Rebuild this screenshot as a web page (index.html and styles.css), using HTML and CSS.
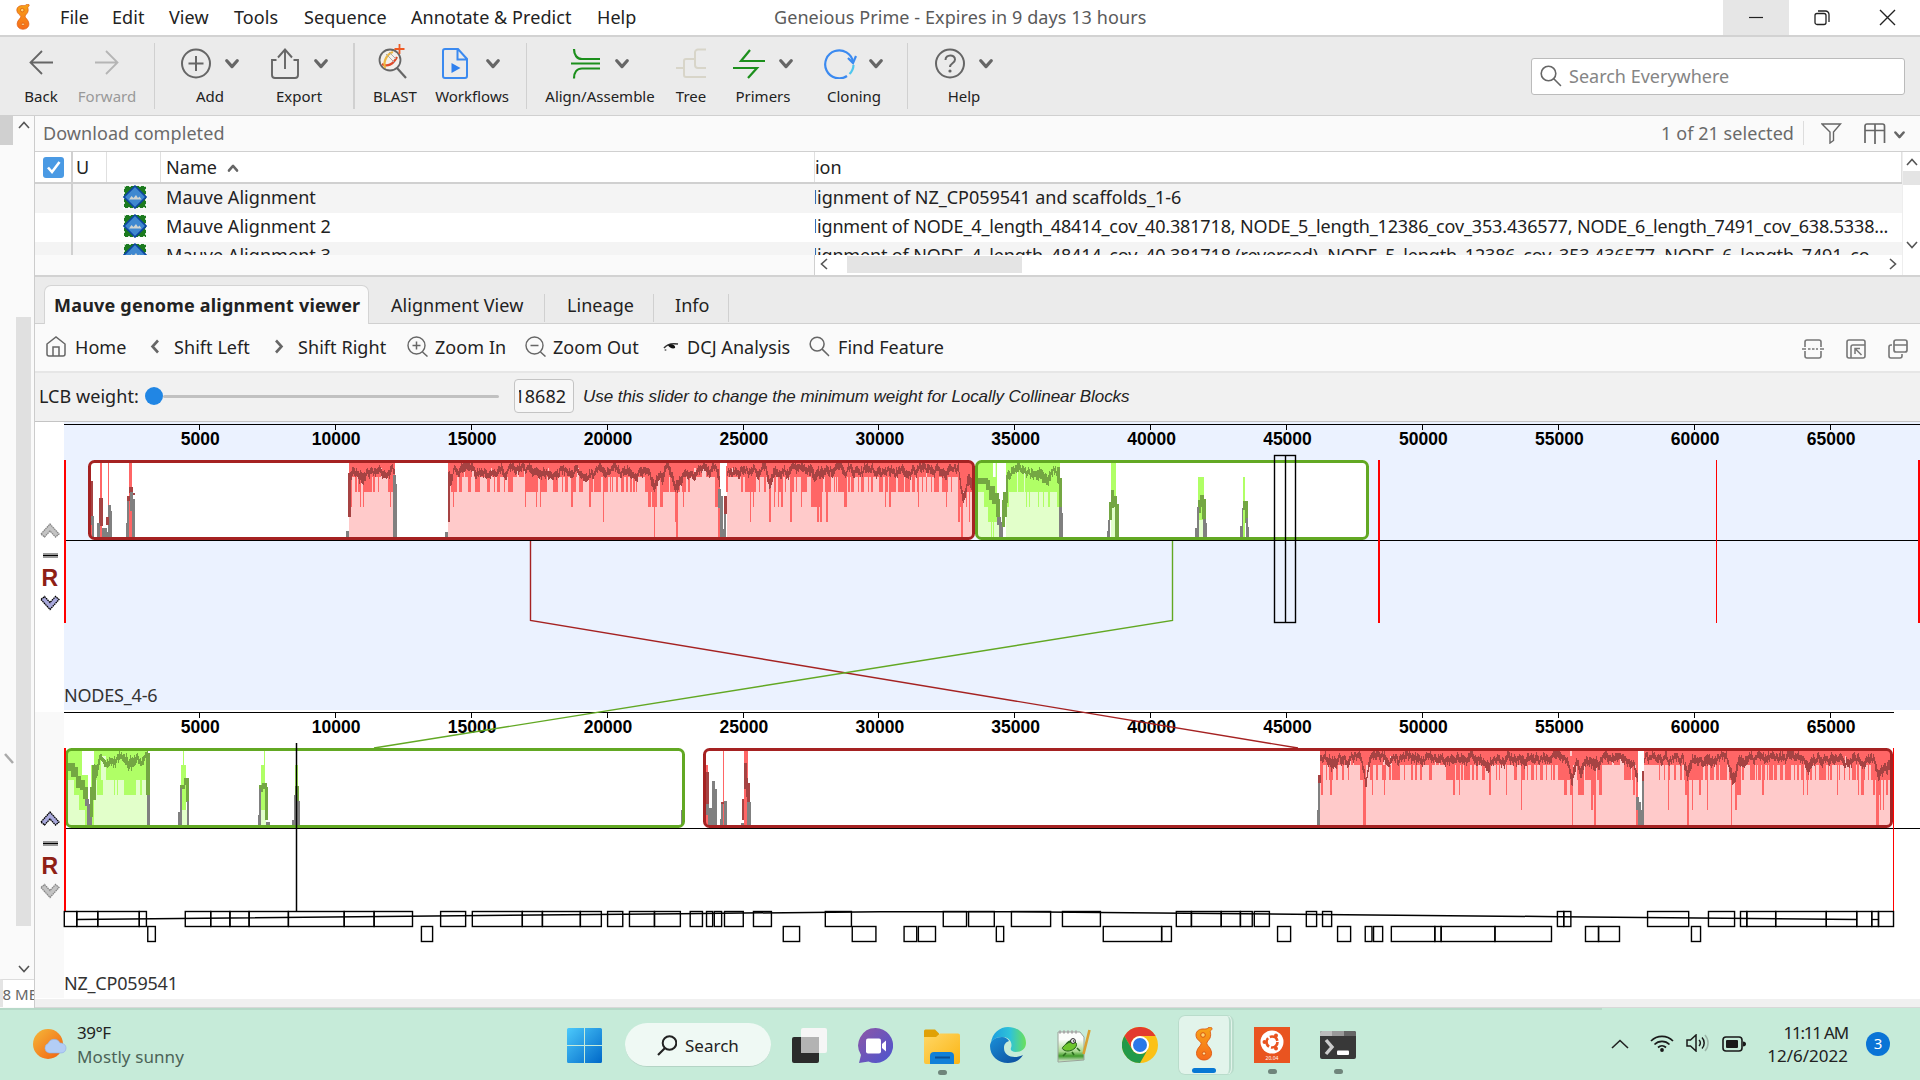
FILE: index.html
```html
<!DOCTYPE html>
<html lang="en">
<head>
<meta charset="utf-8">
<title>Geneious Prime</title>
<link rel="stylesheet" href="styles.css">
</head>
<body>
<svg width="0" height="0" class="defs">
  <defs>
    <linearGradient id="gOrange" x1="0" y1="0" x2="0" y2="1"><stop offset="0" stop-color="#f7a417"/><stop offset="1" stop-color="#f76b1a"/></linearGradient>
    <linearGradient id="gSun" x1="0" y1="0" x2="1" y2="1"><stop offset="0" stop-color="#f5b83a"/><stop offset="1" stop-color="#f2600f"/></linearGradient>
    <linearGradient id="gWin" x1="0" y1="0" x2="1" y2="1"><stop offset="0" stop-color="#4cc9fb"/><stop offset="1" stop-color="#0068c8"/></linearGradient>
    <linearGradient id="gChat" x1="0" y1="0" x2="1" y2="1"><stop offset="0" stop-color="#8e56a6"/><stop offset="1" stop-color="#4a55d0"/></linearGradient>
    <linearGradient id="gFold" x1="0" y1="0" x2="1" y2="1"><stop offset="0" stop-color="#ffd766"/><stop offset="1" stop-color="#fbb514"/></linearGradient>
    <linearGradient id="gEdge" x1="0" y1="0" x2="1" y2="0"><stop offset="0" stop-color="#1b9de0"/><stop offset=".55" stop-color="#2fc3d8"/><stop offset="1" stop-color="#6be05a"/></linearGradient>
    <linearGradient id="gEdge2" x1="0" y1="0" x2="1" y2="1"><stop offset="0" stop-color="#1a8fd8"/><stop offset="1" stop-color="#0c4a9a"/></linearGradient>
    <linearGradient id="gPage" x1="0" y1="0" x2="0" y2="1"><stop offset=".25" stop-color="#fbfdfb"/><stop offset=".65" stop-color="#a9d98f"/><stop offset=".8" stop-color="#3f9a2a"/><stop offset="1" stop-color="#e8f2e4"/></linearGradient>
    <symbol id="chev" viewBox="0 0 14 10"><path d="M1.8 1.8 7 7.6 12.2 1.8" fill="none" stroke="#666" stroke-width="3.2" stroke-linecap="round" stroke-linejoin="round"/></symbol>
    <symbol id="thin" viewBox="0 0 12 8"><path d="M1 7 6 1.5 11 7" fill="none" stroke="#555" stroke-width="1.6"/></symbol>
    <symbol id="logo" viewBox="0 0 18 34"><path d="M13 1c1-1.300 4-1 4 .6 0 1.800-1.600 1.600-1.800 3 .5 2 .8 4-.2 6.400-1 2-3.200 3.500-3.200 5.500 0 2 4 4 4.700 8.500C17.200 30 13.500 33 9 33S.9 30 1.600 25c.6-4.200 4.600-6.400 4.600-8.500C6.200 14.500 1 13 1 8 1 3.500 5 2 8 2c2.500 0 4 .2 5-1z" fill="url(#gOrange)" stroke="#dc5a14" stroke-width=".9"/><circle cx="8" cy="8" r="2.300" fill="#ffd36b" stroke="#d9570f"/><circle cx="9" cy="26.500" r="1.700" fill="#ffe2a0" stroke="#d9570f"/></symbol>
    <symbol id="mauve" viewBox="0 0 24 24"><rect x="1" y="1" width="22" height="22" fill="#1c7a1f"/><rect x="1" y="1" width="22" height="22" fill="none" stroke="#fff" stroke-width="1.500" stroke-dasharray="2 3"/><path d="M12 1 23 12 12 23 1 12z" fill="#3f88d0" stroke="#0d45a0" stroke-width="1.600"/><path d="M6 14.500 8.500 11l2 2 2.500-3 2 3 1.500-1.500L18.500 14.500z" fill="#cfd3d0"/></symbol>
    <symbol id="lens" viewBox="0 0 22 22"><circle cx="8.500" cy="8.500" r="7.300" fill="none" stroke="#666" stroke-width="1.600"/><path d="m14 14 6.500 6.500" stroke="#666" stroke-width="1.600" stroke-linecap="round"/></symbol>
  </defs>
</svg>

<div class="app">
  <header class="titlebar">
    <svg class="logo" width="14" height="26" viewBox="0 0 18 34" preserveAspectRatio="none"><use href="#logo"/></svg>
    <nav class="menu"><span>File</span><span>Edit</span><span>View</span><span>Tools</span><span>Sequence</span><span>Annotate &amp; Predict</span><span>Help</span></nav>
    <div class="title">Geneious Prime - Expires in 9 days 13 hours</div>
    <div class="winbtns">
      <span class="min"><svg width="16" height="16"><path d="M1 7.500h14" stroke="#222" stroke-width="1.200"/></svg></span>
      <span><svg width="16" height="16"><rect x="1" y="3.500" width="11" height="11" rx="2" fill="none" stroke="#222" stroke-width="1.300"/><path d="M4 1h7.500a3.500 3.500 0 0 1 3.500 3.500V12" fill="none" stroke="#222" stroke-width="1.300"/></svg></span>
      <span><svg width="17" height="17"><path d="m1 1 15 15M16 1 1 16" stroke="#222" stroke-width="1.400"/></svg></span>
    </div>
  </header>

  <div class="toolbar">
    <div class="tool back"><div class="pics"><svg width="24" height="26"><path d="M13 1 1.500 12.500 13 24M1.500 12.500H24" fill="none" stroke="#666" stroke-width="1.800"/></svg></div>Back</div>
    <div class="tool fwd"><div class="pics"><svg width="24" height="26"><path d="M11 1 22.500 12.500 11 24M22.500 12.500H0" fill="none" stroke="#b5b5b5" stroke-width="1.800"/></svg></div>Forward</div>
    <i class="sep s1"></i>
    <div class="tool add"><div class="pics"><svg width="30" height="31"><circle cx="15" cy="15.500" r="14" fill="none" stroke="#666" stroke-width="2"/><path d="M15 8v15M7.500 15.500h15" stroke="#666" stroke-width="2"/></svg><svg class="chev" width="14" height="10"><use href="#chev"/></svg></div>Add</div>
    <div class="tool export"><div class="pics"><svg width="30" height="31"><path d="M6.500 12H2v15a3 3 0 0 0 3 3h20a3 3 0 0 0 3-3V12h-4.500M15 21V1.500M8 9.500l7-8 7 8" fill="none" stroke="#666" stroke-width="1.900"/></svg><svg class="chev" width="14" height="10"><use href="#chev"/></svg></div>Export</div>
    <i class="sep s2"></i>
    <div class="tool blast"><div class="pics"><svg class="up" width="32" height="36"><circle cx="14" cy="16" r="10.500" fill="#f4f1ec" stroke="#666" stroke-width="1.800"/><path d="m21 24 9 10" stroke="#666" stroke-width="2.200"/><path d="M6 20c5 3 11 1 15-7" fill="none" stroke="#e04a2a" stroke-width="2.200"/><path d="M17 8c-6 2-10 9-8 16" fill="none" stroke="#edb843" stroke-width="2.200"/><path d="m10 10 9 9M13 8l7 7" stroke="#aaa"/><path d="M23.500 0v10M18.500 5h10" stroke="#ee5a24" stroke-width="1.800"/></svg></div>BLAST</div>
    <div class="tool work"><div class="pics"><svg width="26" height="31"><path d="M3 1h13l9 10v17a2 2 0 0 1-2 2H3a2 2 0 0 1-2-2V3a2 2 0 0 1 2-2zM15.500 1v10.500H25" fill="none" stroke="#3b8af0" stroke-width="2"/><path d="M9.500 15v10l9-5z" fill="#2f80ee"/></svg><svg class="chev" width="14" height="10"><use href="#chev"/></svg></div>Workflows</div>
    <i class="sep s3"></i>
    <div class="tool align"><div class="pics"><svg width="30" height="31"><path d="M3 1c0 6 3 10 8 10h18M0 15.500h29M29 20.500H11c-5 0-8 4-8 10" fill="none" stroke="#1c8f1c" stroke-width="2.200"/></svg><svg class="chev" width="14" height="10"><use href="#chev"/></svg></div>Align/Assemble</div>
    <div class="tool tree"><div class="pics"><svg width="30" height="31"><path d="M0 20h8M8 20v-7a2 2 0 0 1 2-2h9M8 20v7a2 2 0 0 0 2 2h20M30 1.500h-8a3 3 0 0 0-3 3V17a3 3 0 0 0 3 3h8" fill="none" stroke="#d8d5c9" stroke-width="2"/></svg></div>Tree</div>
    <div class="tool prim"><div class="pics"><svg width="32" height="31"><path d="M17 2 8 13h24M0 20h24L15 30" fill="none" stroke="#1c8f1c" stroke-width="2.200"/></svg><svg class="chev" width="14" height="10"><use href="#chev"/></svg></div>Primers</div>
    <div class="tool clon"><div class="pics"><svg width="33" height="31"><path d="M23 28a14 14 0 1 1 6-14" fill="none" stroke="#3b8af0" stroke-width="2.200"/><path d="m24 10 5 5 3-7" fill="none" stroke="#3b8af0" stroke-width="2.200"/><path d="M29.500 17a13 13 0 0 1-4 9" fill="none" stroke="#4fc7ee" stroke-width="2.200"/></svg><svg class="chev" width="14" height="10"><use href="#chev"/></svg></div>Cloning</div>
    <i class="sep s4"></i>
    <div class="tool help"><div class="pics"><svg width="30" height="31"><circle cx="15" cy="15.500" r="14" fill="none" stroke="#666" stroke-width="2"/><path d="M10.500 12c0-6 9.500-6 9.500-.5 0 4-5 3.500-5 7.500" fill="none" stroke="#666" stroke-width="2"/><circle cx="15" cy="23" r="1.600" fill="#666"/></svg><svg class="chev" width="14" height="10"><use href="#chev"/></svg></div>Help</div>
    <div class="search"><svg width="22" height="22"><use href="#lens"/></svg><span>Search Everywhere</span></div>
  </div>

  <div class="workspace">
    <aside class="side">
      <div class="side-top"><i class="stub"></i><svg width="12" height="8"><use href="#thin"/></svg></div>
      <div class="side-track"><svg class="notch" width="13" height="12"><path d="m4 2 8 9" stroke="#aaa" stroke-width="2.500"/></svg><i class="side-thumb"></i></div>
      <svg class="side-down" width="12" height="8"><use href="#thin" transform="rotate(180 6 4)"/></svg>
      <div class="side-mem"><span>68 MB</span></div>
    </aside>

    <main class="main">
      <div class="status"><span class="msg">Download completed</span><span class="sel">1 of 21 selected</span>
        <svg class="filter" width="21" height="21"><path d="M1 1h18.500L12.500 9v8.500L9 20V9z" fill="none" stroke="#666" stroke-width="1.400"/></svg>
        <svg class="cols" width="22" height="21"><path d="M1 20V3a2 2 0 0 1 2-2h15.500a2 2 0 0 1 2 2v17M11 1v20M1 7.500h19.500" fill="none" stroke="#666" stroke-width="1.700"/></svg>
        <svg class="cchev" width="11" height="8" viewBox="0 0 14 10"><use href="#chev"/></svg>
      </div>

      <div class="table">
        <div class="grid">
          <div class="row head"><span class="c-check"><svg width="21" height="21"><rect width="21" height="21" rx="3" fill="#4a9ae4"/><path d="m5 10.500 4 4.500 7.500-10" fill="none" stroke="#fff" stroke-width="2.600"/></svg></span><span class="c-u">U</span><span class="c-icon"></span><span class="c-name">Name<svg width="12" height="8" viewBox="0 0 14 10"><use href="#chev" transform="rotate(180 7 5)"/></svg></span><span class="c-desc hd">ion</span></div>
          <div class="row odd"><span class="c-check"></span><span class="c-u"></span><span class="c-icon"><svg width="24" height="24"><use href="#mauve"/></svg></span><span class="c-name">Mauve Alignment</span><span class="c-desc">lignment of NZ_CP059541 and scaffolds_1-6</span></div>
          <div class="row"><span class="c-check"></span><span class="c-u"></span><span class="c-icon"><svg width="24" height="24"><use href="#mauve"/></svg></span><span class="c-name">Mauve Alignment 2</span><span class="c-desc long">lignment of NODE_4_length_48414_cov_40.381718, NODE_5_length_12386_cov_353.436577, NODE_6_length_7491_cov_638.5338...</span></div>
          <div class="row odd cut"><span class="c-check"></span><span class="c-u"></span><span class="c-icon"><svg width="24" height="24"><use href="#mauve"/></svg></span><span class="c-name">Mauve Alignment 3</span><span class="c-desc long">lignment of NODE_4_length_48414_cov_40.381718 (reversed), NODE_5_length_12386_cov_353.436577, NODE_6_length_7491_co...</span></div>
          <div class="hscroll"><div class="htrack"><svg width="8" height="12"><path d="M7 1 1.500 6 7 11" fill="none" stroke="#555" stroke-width="1.600"/></svg><i></i><svg class="r" width="8" height="12"><path d="m1 1 5.500 5L1 11" fill="none" stroke="#555" stroke-width="1.600"/></svg></div></div>
        </div>
        <div class="vscroll"><svg width="12" height="8"><use href="#thin"/></svg><i></i><svg class="dn" width="12" height="8"><use href="#thin" transform="rotate(180 6 4)"/></svg></div>
      </div>

      <div class="tabs"><b class="tab on">Mauve genome alignment viewer</b><span class="tab t2">Alignment View</span><span class="tab t3">Lineage</span><span class="tab t4">Info</span></div>

      <div class="actions">
        <span class="a1"><svg width="20" height="21"><path d="M1 8 10 1l9 7v10a2 2 0 0 1-2 2H3a2 2 0 0 1-2-2zM7 20v-9h6v9" fill="none" stroke="#666" stroke-width="1.500"/></svg>Home</span>
        <span class="a2"><svg width="10" height="15"><path d="M8 1.500 2.500 7.500 8 13.500" fill="none" stroke="#666" stroke-width="2.600"/></svg>Shift Left</span>
        <span class="a3"><svg width="10" height="15"><path d="m2 1.500 5.500 6L2 13.500" fill="none" stroke="#666" stroke-width="2.600"/></svg>Shift Right</span>
        <span class="a4"><svg width="21" height="21"><circle cx="9.500" cy="9.500" r="8.500" fill="none" stroke="#666" stroke-width="1.400"/><path d="m15.500 16 5 4.500M5.500 9.500h8M9.500 5.500v8" stroke="#666" stroke-width="1.500"/></svg>Zoom In</span>
        <span class="a5"><svg width="21" height="21"><circle cx="9.500" cy="9.500" r="8.500" fill="none" stroke="#666" stroke-width="1.400"/><path d="m15.500 16 5 4.500M5.500 9.500h8" stroke="#666" stroke-width="1.500"/></svg>Zoom Out</span>
        <span class="a6"><svg width="16" height="11"><path d="M1 7c3-4 8-5 14-4" fill="none" stroke="#333" stroke-width="1.500"/><path d="M5 4c3-2 8 0 7 3-2 1-6 0-7-3z" fill="#111"/><circle cx="2.500" cy="9" r="1" fill="#777"/></svg>DCJ Analysis</span>
        <span class="a7"><svg width="21" height="21" viewBox="0 0 22 22"><use href="#lens"/></svg>Find Feature</span>
        <span class="views">
          <svg width="22" height="20"><path d="M3 8V3a2 2 0 0 1 2-2h12a2 2 0 0 1 2 2v5M3 12v5a2 2 0 0 0 2 2h12a2 2 0 0 0 2-2v-5M0 10h4M18 10h4" fill="none" stroke="#777" stroke-width="1.600"/><path d="M6 10h10" stroke="#777" stroke-width="1.500" stroke-dasharray="2.500 1.500"/></svg>
          <svg width="20" height="20"><rect x="1" y="1" width="18" height="18" rx="2" fill="none" stroke="#777" stroke-width="1.600"/><path d="M5 19V8a2 2 0 0 1 2-2h12M9 15V9.500h5M9.500 10l6 6" fill="none" stroke="#777" stroke-width="1.500"/></svg>
          <svg width="20" height="20"><rect x="6" y="1" width="13" height="12" rx="2" fill="none" stroke="#777" stroke-width="1.700"/><path d="M6 6h13M4 6H3a2 2 0 0 0-2 2v9a2 2 0 0 0 2 2h9a2 2 0 0 0 2-2v-2" fill="none" stroke="#777" stroke-width="1.600"/></svg>
        </span>
      </div>

      <div class="lcb"><label>LCB weight:</label><div class="slider"><i class="knob"></i><i class="rail"></i></div><div class="num"><span>18682</span></div><em>Use this slider to change the minimum weight for Locally Collinear Blocks</em></div>

      <svg class="canvas" id="canvas" width="1885" height="577" viewBox="35 422 1885 577"></svg>
      <div class="foot"></div>
    </main>
  </div>

  <footer class="taskbar">
    <i class="edge-line"></i>
    <div class="weather"><svg width="34" height="32"><circle cx="15" cy="15" r="15" fill="url(#gSun)"/><path d="M16 24a5 5 0 0 1-1-9.500 6.500 6.500 0 0 1 12-.5c4 0 6 2.500 6 5 0 3-2 5-5 5z" fill="#b3cdf5" stroke="#8fb0e4" stroke-width=".6"/></svg><div><p>39°F</p><p class="dim">Mostly sunny</p></div></div>
    <div class="apps">
      <svg class="p-win" width="35" height="35"><path d="M0 1.500A1.500 1.500 0 0 1 1.500 0H17v17H0zM18 0h15.500A1.500 1.500 0 0 1 35 1.500V17H18zM0 18h17v17H1.500A1.500 1.500 0 0 1 0 33.500zM18 18h17v15.500a1.500 1.500 0 0 1-1.500 1.500H18z" fill="url(#gWin)"/></svg>
      <div class="pill"><svg width="20" height="21"><circle cx="12.500" cy="8" r="6.800" fill="none" stroke="#222" stroke-width="2"/><path d="m8 13-7 7" stroke="#222" stroke-width="2.200"/></svg>Search</div>
      <svg class="p-task" width="36" height="35"><rect y="9" width="27" height="26" rx="2" fill="#2b2b2b"/><rect x="9" width="26" height="25" rx="2" fill="#f6f6f6"/><path d="M9 9h18v16H9z" fill="#b3b3b3"/></svg>
      <svg class="p-chat" width="35" height="36"><path d="M17.500 0a17.500 17.500 0 1 1-7 33.500L1 35l2-8A17.500 17.500 0 0 1 17.500 0z" fill="url(#gChat)"/><rect x="8" y="10.500" width="15" height="15" rx="2" fill="#fff"/><path d="m24 16 4-3.500v11L24 20z" fill="#fff"/></svg>
      <span class="slot p-fold"><svg width="36" height="35"><path d="M0 2a1.500 1.500 0 0 1 1.500-1.500H11l4 4v5H0z" fill="#e0a106"/><path d="M0 8h12l4-3.500h18a2 2 0 0 1 2 2V33a2 2 0 0 1-2 2H2a2 2 0 0 1-2-2z" fill="url(#gFold)"/><path d="M6 35V27a4 4 0 0 1 4-4h16a4 4 0 0 1 4 4v8z" fill="#1180d8"/><path d="M11 28.500h15" stroke="#0b4f94" stroke-width="2"/></svg><i class="dot"></i></span>
      <svg class="p-edge" width="36" height="36"><path d="M1 16C2 6 10 0 18 0c10 0 18 7 18 16 0 6-5 9-10 9-4 0-6-2-5-4 2-6-2-11-9-11C7 10 3 12 1 16z" fill="url(#gEdge)"/><path d="M12 10C5 10 0 14 0 19c0 10 8 17 18 17 7 0 12-3 15-8-8 4-19 2-19-7 0-4 2-6 5-7-1-2-4-4-7-4z" fill="url(#gEdge2)"/></svg>
      <svg class="p-npp" width="36" height="36"><path d="M2 4h22l4 5v23l-26 2z" fill="url(#gPage)" stroke="#9aa39a" stroke-width="1"/><path d="M3 4h20" stroke="#aaa" stroke-width="3" stroke-dasharray="2 2"/><path d="M9 19c1-5 6-7 9-6M10 25l-3 3M16 24l2 3M21 20l3 3" fill="none" stroke="#2c6d1f" stroke-width="1.600"/><path d="M7 19c3-4 8-6 12-5 2 1 2 4 0 6-3 3-8 4-11 2-2-1-2-2-1-3z" fill="#6cc52c" stroke="#27621c" stroke-width="1"/><circle cx="17" cy="13" r="2.400" fill="#fff" stroke="#222"/><circle cx="17.500" cy="13" r=".8" fill="#111"/><path d="m33.500 2-5 20-1 4" fill="none" stroke="#d9a132" stroke-width="2.600"/></svg>
      <svg class="p-chr" width="36" height="36" viewBox="-18 -18 36 36"><circle r="18" fill="#fbc116"/><path d="M-15.600-9A18 18 0 0 1 15.600-9H0A9 9 0 0 0-7.800 4.500z" fill="#e33b2e"/><path d="M-15.600-9A18 18 0 0 0 0 18L7.800 4.500A9 9 0 0 1-7.800 4.500z" fill="#229a48"/><circle r="9" fill="#fff"/><circle r="7" fill="#2a78e8"/></svg>
      <span class="slot p-gen"><svg width="18" height="34"><use href="#logo"/></svg><i class="bar"></i></span>
      <span class="slot p-ubu"><svg width="36" height="36"><path d="M0 0h36v36H0z" fill="#e95420"/><circle cx="18" cy="15" r="11.500" fill="#fff"/><circle cx="18" cy="15" r="5.500" fill="none" stroke="#e95420" stroke-width="2.600" stroke-dasharray="9.500 2"/><g fill="#e95420"><circle cx="10.500" cy="15" r="2"/><circle cx="22" cy="8.500" r="2"/><circle cx="22" cy="21.500" r="2"/></g><text x="18" y="33" class="ubv">20.04</text></svg><i class="dot"></i></span>
      <span class="slot p-term"><svg width="36" height="28"><rect width="36" height="28" rx="2" fill="#383838"/><path d="M0 5V2a2 2 0 0 1 2-2h10v5z" fill="#bbb"/><path d="M12 0h12v5H12z" fill="#999"/><path d="M24 0h10a2 2 0 0 1 2 2v3H24z" fill="#666"/><path d="m6 9 6 7-6 7" fill="none" stroke="#ccc" stroke-width="3.400"/><rect x="17" y="19.500" width="12" height="4.500" rx="1" fill="#fff"/></svg><i class="dot"></i></span>
    </div>
    <div class="tray">
      <svg class="t-up" width="18" height="10"><path d="m1 9 8-7.500L17 9" fill="none" stroke="#222" stroke-width="1.600"/></svg>
      <svg class="t-wifi" width="24" height="18"><path d="M1 7a15.500 15.500 0 0 1 22 0M4.500 10.500a10.500 10.500 0 0 1 15 0M8 13.500a6 6 0 0 1 8 0" fill="none" stroke="#1a1a1a" stroke-width="1.700"/><circle cx="12" cy="16" r="1.900" fill="#1a1a1a"/></svg>
      <svg class="t-snd" width="24" height="18"><path d="M1 6h3.500L10 1v16l-5.500-5H1z" fill="none" stroke="#1a1a1a" stroke-width="1.500"/><path d="M13 6a4 4 0 0 1 0 6M16 3.500a8 8 0 0 1 0 11" fill="none" stroke="#1a1a1a" stroke-width="1.500"/><path d="M19 1a12 12 0 0 1 0 16" fill="none" stroke="#9bb5a8" stroke-width="1.500"/></svg>
      <svg class="t-bat" width="24" height="16"><rect x="1" y="1" width="19" height="14" rx="3" fill="none" stroke="#1a1a1a" stroke-width="1.600"/><rect x="4" y="4" width="12" height="8" rx="1" fill="#1a1a1a"/><path d="M21 5.500c2 0 3 1 3 2.500s-1 2.500-3 2.500z" fill="#1a1a1a"/></svg>
      <div class="clock"><p class="time">11:11 AM</p><p>12/6/2022</p></div>
      <span class="badge">3</span>
    </div>
  </footer>
</div>
<script src="chart.js"></script>
</body>
</html>
```
FILE: styles.css
```css
* { box-sizing: border-box; }
body { margin: 0; width: 1920px; height: 1080px; overflow: hidden; font: 18px/24px "Noto Sans", sans-serif; color: #222; background: #fafafa; }
svg { display: block; flex: none; }
p { margin: 0; }
i { display: block; flex: none; }
.defs { position: absolute; }
.app { display: flex; flex-direction: column; height: 1080px; }

.titlebar { height: 37px; flex: none; display: flex; align-items: center; background: #fff; border-bottom: 2px solid #d2d2d2; }
.logo { margin: -2px 0 0 16px; }
.menu { display: grid; grid-template-columns: 52px 57px 65px 70px 107px 186px 177px; margin: -2px 0 0 30px; white-space: nowrap; letter-spacing: .06px; }
.title { color: #5a5a5a; white-space: nowrap; letter-spacing: .08px; margin-top: -2px; }
.winbtns { margin-left: auto; display: grid; grid-template-columns: 66px 66px 65px; height: 35px; }
.winbtns span { display: grid; place-items: center; }
.winbtns .min { background: #e6e6e6; }

.toolbar { height: 79px; flex: none; display: flex; align-items: flex-start; background: #ebebeb; border-bottom: 1px solid #d0d0d0; font-size: 15px; line-height: 20px; }
.tool { display: flex; flex-direction: column; align-items: center; white-space: nowrap; padding-top: 8px; gap: 5px; }
.pics { height: 36px; display: flex; align-items: center; gap: 14px; }
.chev { margin-top: 2px; }
.up { margin: -2px 6px 0 0; }
.sep { width: 1px; height: 66px; margin-top: 6px; background: #d0d0d0; }
.back { width: 54px; margin-left: 14px; } .fwd { width: 78px; color: #999; }
.s1 { margin-left: 8px; } .add { width: 60px; margin-left: 25px; } .export { width: 60px; margin-left: 29px; }
.s2 { margin-left: 24px; width: 2px; } .blast { width: 50px; margin-left: 15px; } .work { width: 80px; margin-left: 12px; }
.work .pics { gap: 18px; margin-left: -2px; } .clon .pics { gap: 12px; margin-left: -2px; }
.s3 { margin-left: 14px; } .align { width: 110px; margin-left: 18px; } .tree { width: 32px; margin-left: 20px; }
.prim { width: 56px; margin-left: 28px; } .clon { width: 60px; margin-left: 33px; } .s4 { margin-left: 23px; }
.help { width: 60px; margin-left: 26px; } .help .pics { margin-left: -1px; }
.search { margin: 21px 15px 0 auto; width: 374px; height: 37px; border: 1px solid #bbb; border-radius: 3px; background: #fff; display: flex; align-items: center; gap: 7px; padding: 0 0 2px 8px; color: #858585; font-size: 18px; }

.workspace { flex: 1; display: flex; min-height: 0; }
.side { width: 35px; flex: none; border-right: 1px solid #ccc; background: #fafafa; display: flex; flex-direction: column; }
.side-top { height: 29px; display: flex; }
.side-top svg { margin: 5px 0 0 5px; }
.stub { width: 13px; height: 29px; background: #d0d0d0; }
.side-track { height: 816px; padding: 172px 3px 0 16px; position: relative; }
.side-thumb { width: 15px; height: 609px; background: #e0e0e0; }
.notch { position: absolute; left: 1px; top: 607px; }
.side-down { margin: 4px 0 0 18px; }
.side-mem { margin: 6px 0 0; height: 28px; border-top: 1px solid #ddd; border-left: 3px solid #e4e4e4; overflow: hidden; background: #fff; color: #666; font-size: 15px; line-height: 29px; white-space: nowrap; }
.side-mem span { margin-left: -9px; }

.main { width: 1885px; display: flex; flex-direction: column; }
.status { height: 36px; flex: none; display: flex; align-items: center; padding-left: 8px; border-bottom: 1px solid #d0d0d0; color: #6a6a6a; }
.msg { margin-top: -2px; letter-spacing: .07px; }
.sel { margin: -2px 0 0 auto; padding-right: 9px; border-right: 1px solid #ddd; letter-spacing: .06px; }
.filter { margin-left: 17px; } .cols { margin-left: 22px; } .cchev { margin: 2px 15px 0 8px; }

.table { height: 125px; flex: none; display: flex; border-bottom: 2px solid #d2d2d2; }
.grid { width: 1867px; }
.row { display: grid; grid-template-columns: 38px 34px 54px 654px 1087px; height: 29px; background: #fff; line-height: 27px; white-space: nowrap; overflow: hidden; }
.row > span { overflow: hidden; }
.row.odd { background: #f4f4f4; }
.row.head { height: 32px; border-bottom: 2px solid #d0d0d0; line-height: 31px; }
.head span { border-right: 1px solid #e0e0e0; }
.row .c-check { border-right: 2px solid #d0d0d0; padding: 5px 0 0 8px; }
.c-u { padding-left: 3px; }
.c-icon svg { margin: 1px 0 0 16px; }
.c-name { padding-left: 5px; display: flex; gap: 10px; letter-spacing: .05px; }
.c-name svg { margin-top: 12px; }
.c-desc { text-indent: -2.500px; letter-spacing: -.02px; }
.c-desc.long { letter-spacing: -.155px; }
.c-desc.hd { text-indent: 0; }
.row.cut { height: 13px; line-height: 26px; }
.hscroll { height: 20px; background: #fafafa; padding-left: 779px; }
.htrack { height: 20px; background: #fff; border-left: 1px solid #d0d0d0; display: flex; align-items: center; padding: 0 5px 2px; }
.htrack i { width: 175px; height: 17px; margin-left: 19px; background: #e4e4e4; }
.htrack .r { margin-left: auto; }
.vscroll { width: 18px; background: #fff; border-left: 1px solid #eee; display: flex; flex-direction: column; align-items: center; padding-top: 6px; }
.vscroll i { width: 17px; height: 14px; margin-top: 5px; background: #e4e4e4; }
.vscroll .dn { margin-top: 56px; }

.tabs { height: 47px; flex: none; display: flex; align-items: flex-end; background: #ebebeb; padding-left: 9px; box-shadow: inset 0 -1px #d0d0d0; white-space: nowrap; }
.tab { height: 39px; line-height: 40px; letter-spacing: .05px; }
.tab.on { width: 325px; background: #fafafa; border: 1px solid #d4d4d4; border-bottom: 0; border-radius: 7px 7px 0 0; padding-left: 9px; line-height: 38px; letter-spacing: .2px; }
.tab:not(.on) { background: linear-gradient(#d0d0d0, #d0d0d0) right 9px / 1px 28px no-repeat; }
.t2 { width: 176px; padding-left: 22px; } .t3 { width: 109px; padding-left: 22px; } .t4 { width: 75px; padding-left: 21px; }

.actions { height: 49px; flex: none; display: flex; align-items: center; border-bottom: 2px solid #e6e6e6; padding: 0 0 2px 11px; white-space: nowrap; letter-spacing: .06px; }
.actions > span { display: flex; align-items: center; gap: 9px; flex: none; }
.actions .a1 { width: 104px; } .actions .a2 { width: 124px; gap: 14px; } .actions .a3 { width: 133px; gap: 14px; }
.actions .a4 { width: 118px; gap: 7px; } .actions .a5 { width: 138px; gap: 7px; } .actions .a6 { width: 146px; gap: 8px; } .actions .a7 { gap: 8px; }
.actions .views { margin: 4px 12px 0 auto; gap: 22px; }

.lcb { height: 49px; flex: none; display: flex; align-items: center; background: #f1f1f1; border-bottom: 1px solid #c4c4c4; padding: 0 0 2px 4px; white-space: nowrap; }
.lcb label { width: 106px; letter-spacing: .05px; }
.slider { width: 354px; display: flex; align-items: center; }
.knob { width: 18px; height: 18px; border-radius: 50%; background: #2186e4; }
.rail { width: 336px; height: 3px; border-radius: 2px; background: #c1c1c1; }
.num { margin-left: 15px; width: 60px; height: 34px; border: 1px solid #c4c4c4; border-radius: 4px; background: #f7f7f7; padding: 4px 7px 0 4px; display: flex; }
.num span { width: 49px; overflow: hidden; direction: rtl; }
.lcb em { margin: 2px 0 0 9px; font: italic 17px "Liberation Sans", sans-serif; letter-spacing: -.06px; }

.canvas { flex: none; background: #fff; }
.axis { font: bold 17.500px "Liberation Sans", sans-serif; text-anchor: middle; fill: #000; }
.seq { font: 18px "Noto Sans", sans-serif; letter-spacing: -.2px; fill: #333; }
.rev { font: bold 23px "Liberation Sans", sans-serif; fill: #8f2015; }
.foot { flex: 1; background: #f0f0f0; border-bottom: 1px solid #d8d8d8; }

.taskbar { height: 72px; flex: none; display: flex; align-items: flex-start; background: #c6ebd9; position: relative; }
.edge-line { position: absolute; left: 0; top: 0; width: 1602px; height: 2px; background: #b6d9c8; }
.weather { width: 567px; display: flex; gap: 10px; padding: 13px 0 0 33px; font-size: 17px; }
.weather svg { margin-top: 8px; } .weather p { line-height: 24px; } .weather .dim { color: #4c6357; letter-spacing: .1px; }
.weather p:first-child { letter-spacing: -.5px; }
.apps { display: flex; align-items: flex-start; }
.apps > * { flex: none; }
.p-win { margin-top: 20px; }
.pill { margin: 15px 0 0 23px; width: 146px; height: 44px; border-radius: 22px; background: #eff9f4; border-bottom: 1px solid #b4d4c5; display: flex; align-items: center; gap: 8px; padding: 2px 0 0 32px; font-size: 17px; }
.p-task { margin: 20px 0 0 21px; } .p-chat { margin: 20px 0 0 30px; }
.slot { display: flex; flex-direction: column; align-items: center; }
.dot { width: 9px; height: 5px; border-radius: 3px; background: #6f857b; margin-top: 6px; }
.p-fold { margin: 21px 0 0 31px; width: 36px; } .p-edge { margin: 19px 0 0 30px; } .p-npp { margin: 20px 0 0 30px; } .p-chr { margin: 19px 0 0 30px; }
.p-gen { margin: 7px 0 0 20px; width: 56px; height: 60px; border-radius: 7px; background: #e2f4eb; border: 1px solid #b9dccb; border-right: 5px double #b9dccb; padding-top: 11px; }
.bar { width: 24px; height: 5px; border-radius: 3px; background: #0878d4; margin-top: 7px; }
.p-ubu { margin: 19px 0 0 20px; width: 36px; }
.ubv { font: 5px "Noto Sans", sans-serif; text-anchor: middle; fill: #fff; }
.p-term { margin: 23px 0 0 30px; width: 36px; } .p-term .dot { margin-top: 10px; }
.tray { margin-left: auto; width: 309px; display: flex; align-items: flex-start; font-size: 17px; }
.t-up { margin-top: 31px; } .t-wifi { margin: 26px 0 0 21px; } .t-snd { margin: 26px 0 0 12px; } .t-bat { margin: 28px 0 0 12px; }
.clock { width: 102px; text-align: right; padding-top: 13px; }
.clock p { line-height: 23px; } .clock .time { letter-spacing: -1.200px; }
.badge { margin: 24px 0 0 18px; width: 24px; height: 24px; border-radius: 50%; background: #0a74d6; color: #fff; text-align: center; font-size: 15px; line-height: 23px; }
```
FILE: chart.js
```js
// Draws the genome panels: rulers, locally collinear blocks, similarity profiles and annotations.
const PANEL = 288, RED = ['#a52222', '#ff6666', '#ffcaca', '#a64343'], GREEN = ['#62a823', '#b0ff66', '#e2ffca', '#74a743'];
const out = [];
const rect = (x0, x1, y0, y1, c) => out.push(`<path d="M${x0} ${y0}H${x1}V${y1}H${x0}z" fill="${c}" shape-rendering="crispEdges"/>`);
const line = (pts, c, w = 1) => out.push(`<polyline points="${pts}" fill="none" stroke="${c}" stroke-width="${w}"/>`);
const frame = (x0, x1, y0, y1) => out.push(`<rect x="${x0}" y="${y0}" width="${x1 - x0}" height="${y1 - y0}" fill="none" stroke="#000" stroke-width="1.4"/>`);
const text = (x, y, cls, s) => out.push(`<text x="${x}" y="${y}" class="${cls}">${s}</text>`);
let seed = 7;
const rnd = () => (seed = (seed * 16807) % 2147483647) / 2147483647;
const spans = s => s.trim().split(/[\s,]+/).map(t => { const [a, b] = t.split('-').map(Number); return [a, b || a + 2.6]; });

// One similarity region. f maps sample units to canvas x; levels are tooth lists for each depth.
function region(top, x0, x1, f, pal, base, levels, slits, dips, mid = 7.5) {
  rect(x0, x1, top, top + 74, pal[2]);
  rect(x0, x1, top, top + base, pal[1]);
  levels.forEach(([depth, list]) => spans(list).forEach(([a, b]) => rect(f(a), f(b), top + 3, top + depth, pal[1])));
  if (slits) spans(slits).forEach(([a, b]) => rect(f(a), f(b), top + 5, top + base, pal[2]));
  let d = '', w = mid;
  for (let x = x0; x < x1; x++) {
    w += (rnd() - .5) * 6.5 + (mid - w) * .25;
    let y = w, h = 4.5 + rnd() * 5;
    dips.forEach(([p, depth, r = 5]) => { const k = 1 - Math.abs(x - f(p)) / r; if (k > 0) { y += (depth - mid) * k; h += 4 * k; } });
    y = Math.max(0, y - h / 2);
    d += `M${x} ${top + Math.round(y)}h1v${Math.round(h)}h-1z`;
  }
  out.push(`<path d="${d}" fill="${pal[3]}" shape-rendering="crispEdges"/>`);
}
const bars = (f, dy, pal, list) => list.forEach(([a, b, y0, y1, k]) => rect(f(a), f(b), y0 / 3 + dy, y1 / 3 + dy, k < 0 ? '#808080' : pal[k]));
const block = (x0, x1, y, c) => out.push(`<rect x="${x0 + 1.5}" y="${y + 1.5}" width="${x1 - x0 - 3}" height="77" rx="5" fill="none" stroke="${c}" stroke-width="3"/>`);
const white = (x0, x1, y) => out.push(`<rect x="${x0}" y="${y}" width="${x1 - x0}" height="80" rx="6" fill="#fff"/>`);

// Backgrounds and rulers
rect(64, 1920, 422, 710, '#ebf2ff');
rect(35, 64, 712, 998, '#f9f9f9');
[[0, 1920], [PANEL, 1894]].forEach(([o, end]) => {
  rect(64, end, 424 + o, 425 + o, '#000');
  for (let i = 1; i <= 13; i++) {
    const x = 64 + i * 135.9;
    rect(Math.round(x) - 1, Math.round(x), 425 + o, 430 + o, '#000');
    text(x + .4, 444.5 + o, 'axis', i * 5000);
  }
});

const A = x => x / 3, B = x => 440 + x / 2.8, C = x => 900 + x / 3, D = x => x / 2.24, E = x => 680 + x / 2.45, F = x => 1300 + x / 2.529;

// Upper panel, red block
white(88, 975, 460);
bars(A, 440, RED, [[271, 279, 122, 228, 3], [270, 282, 228, 291, -1], [272, 275, 255, 291, 1], [300, 306, 69, 291, 1], [297, 308, 175, 258, 3], [291, 300, 248, 291, -1], [305, 320, 265, 291, -1],
  [324, 327, 69, 195, 1], [324, 333, 195, 291, -1], [327, 336, 213, 291, -1], [318, 326, 232, 255, 3], [315, 324, 276, 291, -1], [387, 396, 69, 291, 1], [387, 399, 142, 160, 3], [396, 405, 158, 165, 3], [381, 389, 168, 184, 3], [381, 388, 182, 291, -1], [378, 384, 250, 291, -1], [389, 399, 157, 212, -1], [396, 405, 178, 291, -1]]);
region(463, 349, 395, A, RED, 14, [[29, '1053-1057 1065-1070 1075-1083 1090-1115 1118-1124 1133-1137 1163-1185'], [44, '1054 1080 1089 1171'], [74, '1180-1183']], '1143', [[1047, 20, 4], [1085, 12, 6]]);
bars(A, 440, RED, [[1044, 1053, 100, 230, 3], [1038, 1047, 272, 291, -1], [1180, 1188, 105, 291, -1], [1185, 1191, 132, 291, -1]]);
region(463, 448, 720, B, RED, 14, [
  [29, '31-48 53-62 78-88 98-112 132-140 150-155 160-168 178-182 190-204 238-274 280-300 315-330 342-345 350-358 366-380 388-400 418-428 432-450 455-470 475-478 481-483 492-498 508-514 522-525 532-537 540-545 550-552 575-608 615-640 645-672 678-690 695-700 770-784'],
  [44, '37 239 268 281 367-372 418-423 582-592 594-608 615-624 658-665 679-683 770-784'], [59, '457 658-665'], [74, '600 661-665 778-784']],
  '66-70 90-94 143-146 216-220 234-238 302-305 384-390 711-716 733-746', [[26, 18, 4], [600, 24, 6], [622, 20, 4], [662, 20, 8], [784, 22, 4]]);
bars(B, 440, RED, [[21, 28, 115, 245, 3], [14, 22, 277, 291, -1]]);
rect(720, 726, 463, 537, '#fff');
bars(B, 440, RED, [[778, 788, 148, 204, -1], [784, 792, 168, 291, -1], [790, 796, 267, 291, -1], [795, 802, 220, 291, -1], [795, 804, 167, 222, 3]]);
region(463, 727, 973, B, RED, 14, [
  [29, '802-806 843-847 853-885 893-897 908-912 920-928 935-940 946-960 965-970 980-990 997-1000 1012-1028 1038-1072 1078-1095 1102-1105 1110-1112 1115-1140 1143-1148 1151-1160 1170-1173 1180-1187 1197-1201 1207-1213 1220-1222 1230-1240 1245-1255 1258-1278 1282-1300 1303-1316 1322-1330 1335-1342 1350 1362 1375 1383-1396 1406-1422 1430-1434 1450-1493'],
  [44, '869 877 920-927 935-938 946 954-959 980-986 1011 1040-1070 1080-1086 1131-1139 1247 1257-1262 1339 1416 1450-1463 1472-1475 1481'],
  [59, '868 921-926 980-985 1056-1061 1065-1069 1081-1086 1450-1456 1482'], [74, '1459-1463']],
  '818-821 1360-1364', [[922, 24, 4], [1050, 14, 12], [1463, 30, 5], [1485, 16, 8]]);

// Upper panel, green block
white(975, 1369, 460);
rect(977, 999, 463, 537, GREEN[1]);
bars(C, 440, GREEN, [[235, 252, 155, 291, 2], [250, 264, 200, 291, 2], [264, 297, 245, 291, 2], [273, 276, 245, 291, 1], [279, 282, 245, 291, 1], [279, 289, 69, 110, 2], [291, 300, 69, 180, 2]]);
rect(997, 1006, 463, 500, '#fff'); rect(993, 995, 463, 477, '#fff');
rect(1000, 1003, 500, 520, '#fff');
region(463, 1006, 1060, C, GREEN, 29, [[44, '318-328 378 388 415 428-431 444-450 471-480']], '351-354 372-375', [[318, 20, 5], [430, 13, 10], [478, 22, 4]], 9);
bars(C, 440, GREEN, [[235, 264, 113, 132, 3], [258, 270, 120, 150, 3], [267, 285, 138, 180, 3], [276, 297, 160, 192, 3], [288, 300, 178, 232, 3], [291, 303, 230, 255, -1], [298, 309, 245, 291, -1], [306, 315, 180, 262, 3], [310, 321, 155, 230, 3], [317, 325, 105, 190, 3], [471, 479, 80, 130, 3], [476, 486, 115, 202, 3], [478, 486, 202, 291, -1], [483, 489, 218, 291, -1],
  [633, 648, 69, 200, 1], [633, 648, 200, 291, 2], [632, 643, 150, 205, 3], [628, 635, 185, 240, 3], [638, 650, 168, 200, 3], [646, 656, 192, 291, 3], [624, 630, 240, 291, -1], [621, 627, 272, 291, -1],
  [894, 912, 110, 240, 1], [898, 912, 240, 291, 2], [893, 903, 180, 220, 3], [900, 911, 165, 200, 3], [907, 918, 178, 238, 3], [890, 896, 200, 291, -1], [885, 892, 264, 291, -1], [910, 918, 238, 291, -1], [915, 921, 250, 291, -1],
  [1029, 1035, 110, 291, 1], [1028, 1043, 184, 210, 3], [1035, 1043, 195, 250, 3], [1026, 1030, 205, 291, -1], [1020, 1027, 258, 291, -1], [1037, 1043, 235, 291, -1], [1041, 1047, 260, 291, -1]]);

// Lower panel, green block
white(65, 685, 748);
bars(D, 700, GREEN, [[150, 183, 153, 376, 1], [183, 196, 225, 376, 1], [151, 166, 240, 376, 2], [160, 178, 285, 376, 2], [178, 190, 330, 376, 2], [203, 214, 195, 376, 1]]);
region(751, 94, 148, D, GREEN, 29, [[44, '218-230 255 262 278-305 314-317 326-332']], '227-237', [[214, 18, 5], [290, 14, 10]], 8);
bars(D, 700, GREEN, [[150, 167, 190, 213, 3], [160, 175, 200, 232, 3], [171, 181, 228, 264, 3], [179, 191, 240, 270, 3], [186, 196, 262, 298, 3], [190, 200, 298, 318, -1], [195, 205, 312, 376, -1], [202, 209, 262, 350, 3], [207, 215, 195, 300, 3], [327, 335, 160, 285, 3], [330, 337, 285, 376, -1],
  [409, 412, 153, 200, 1], [405, 417, 195, 330, 1], [407, 418, 330, 376, 2], [403, 414, 255, 268, 3], [412, 423, 235, 255, 3], [416, 423, 250, 305, 3], [403, 408, 265, 376, -1], [399, 405, 335, 376, -1], [418, 424, 302, 376, -1],
  [591, 594, 153, 200, 1], [585, 594, 195, 330, 1], [585, 596, 330, 376, 2], [581, 590, 256, 275, 3], [587, 598, 250, 268, 3], [594, 600, 262, 360, 3], [580, 585, 268, 376, -1], [577, 582, 345, 376, -1], [596, 604, 367, 376, -1],
  [661, 668, 195, 376, 1], [661, 670, 258, 302, 3], [659, 664, 285, 376, -1], [655, 661, 360, 376, -1], [666, 673, 302, 376, -1], [1525, 1530, 330, 376, -1]]);

// Lower panel, red block
white(703, 1894, 748);
bars(E, 700, RED, [[62, 68, 195, 376, 1], [62, 71, 216, 312, 3], [64, 71, 312, 345, -1], [68, 78, 325, 376, -1], [78, 86, 243, 376, -1], [84, 91, 267, 376, -1], [105, 108, 153, 376, 1], [100, 115, 306, 313, 3], [101, 106, 313, 376, -1], [98, 102, 357, 376, -1], [107, 115, 304, 376, -1],
  [157, 167, 153, 376, 1], [157, 164, 190, 267, 3], [152, 158, 297, 360, 3], [150, 157, 370, 376, -1], [162, 167, 234, 290, 3], [165, 171, 250, 306, 3], [165, 173, 306, 376, -1]]);
region(751, 1320, 1638, F, RED, 14, [
  [29, '51-58 66-68 74-83 90-97 105-112 121-125 152-166 178-182 192-196 208-217 226-229 232-254 264 281-285 291-295 303-309 325-334 369-392 395-404 408-411 415-430 434-441 446-449 460-468 478-483 495-498 503 520-523 540-550 558-568 573-576 583-592 596-600 607-615 622-625 635 640-644 653-690 700-718 722-746 750-765 820-836 840-846 850-855'],
  [44, '52-57 77-82 159-166 181 212-216 387-391 401 478-482 521 668-675 682-690 704-717 736-748 756-764 843-848 850-855'],
  [59, '559 736-740'], [74, '159-166 688 744-748 850-855']],
  '126-129 134-136 210-214 228-232 341-344 351-354 789-793 810-820', [[80, 12, 6], [165, 38, 5], [475, 13, 3], [565, 12, 4], [688, 24, 5], [708, 20, 4], [745, 18, 7], [854, 32, 5]]);
rect(1638, 1644, 751, 825, '#fff');
bars(F, 700, RED, [[683, 688, 153, 168, 2], [45, 52, 225, 250, 3], [46, 51, 250, 376, -1], [43, 46, 330, 376, -1], [850, 857, 290, 330, -1], [855, 862, 306, 376, -1], [860, 866, 330, 376, -1], [865, 870, 243, 376, -1], [865, 873, 213, 243, 3]]);
region(751, 1644, 1891, F, RED, 14, [
  [29, '908 920-924 931-936 946-951 961-966 971-1010 1014-1019 1025-1033 1037-1048 1052-1060 1063-1080 1085-1113 1118-1122 1137-1150 1153 1159-1165 1170-1176 1182 1187-1196 1198-1206 1213-1221 1226-1243 1249-1253 1258-1262 1267-1274 1280-1286 1290-1295 1302-1306 1312-1330 1336 1341-1346 1357 1362 1376 1388 1396-1405 1408-1413 1418-1430 1436 1444-1449 1455-1492'],
  [44, '931 973-984 992 1009-1014 1030 1100-1115 1168-1173 1272 1283 1357 1410 1420-1426 1448-1455 1458-1466 1481-1487'],
  [59, '931 992 1030 1100-1105 1466-1470 1474'], [74, '979-984 1090 1457-1464']],
  '1378-1381', [[979, 24, 5], [1030, 14, 5], [1093, 26, 6], [1110, 14, 10], [1285, 12, 4], [1464, 30, 6], [1485, 18, 6]]);

block(88, 975, 460, RED[0]); block(975, 1369, 460, GREEN[0]);
block(65, 685, 748, GREEN[0]); block(703, 1893, 748, RED[0]);

rect(64, 1920, 540, 541, '#000'); rect(64, 1920, 828, 829, '#000');
[[64, 66, 0], [1378, 1380, 0], [1716, 1717, 0], [1918, 1920, 0], [64, 66, PANEL], [1893, 1894, PANEL]].forEach(([a, b, o]) => rect(a, b, 460 + o, 623 + o - (o ? 0 : 0), '#f00'));

// Links between matching blocks
line('530.5,541 530.5,620.5 1298,748', RED[0], 1.4);
line('1172.5,541 1172.5,620.5 374,748', GREEN[0], 1.4);

// Selection and cursor
frame(1274.5, 1295.5, 455.5, 622.5);
line('1285.5,455 1285.5,622', '#000', 1.4);
line('296.5,743 296.5,911', '#000', 1.5);

// Annotated features on both strands
const feats = (f, y, s) => spans(s).forEach(([a, b]) => frame(f(a), f(b), y, y + 15));
feats(D, 911.5, '144-172 172-219 219-312 312-328 415-472 472-515 515-558 558-646 646-771 771-838 838-924 987-1043 1058-1170 1170-1215 1215-1300 1300-1347 1361-1395 1410-1466 1466-1524');
feats(E, 911.5, '25-55 65-80 84-102 109-155 180-224 356-420 645-702 707-770 812-908 937-1030 1216-1253 1253-1326 1326-1373 1373-1402 1407-1444');
feats(F, 911.5, '16-42 57-80 651-667 667-685 879-983 1033-1099 1114-1130 1130-1203 1203-1331 1331-1408 1408-1446 1446-1463 1463-1501');
feats(D, 926.5, '331-348 944-969');
feats(E, 926.5, '253-293 422-480 549-580 584-626 775-793 1037-1180 1180-1204 1464-1496');
feats(F, 926.5, '95-128 165-182 186-209 231-341 341-357 357-493 493-636 722-755 755-808 990-1013');
line('77,919.5 680,913.7 880,911.7 1000,911.7 1320,914.5 1560,916.7 1857,919.5', '#000', 1.5);
line('1872,919.5 1878,919.5', '#000', 1.3);

text(64, 702, 'seq', 'NODES_4-6'); text(64, 990, 'seq', 'NZ_CP059541');

// Reorder and reverse controls
const arrow = (y, flip, on) => out.push(`<path transform="translate(50 ${y}) scale(1 ${flip})" d="M-9 4 0-6 9 4 5.500 7 0 1-5.500 7z" fill="${on ? '#a9a9dc' : '#c4c4c4'}" stroke="${on ? '#000' : '#888'}" stroke-width="1.3" stroke-dasharray="1.6 .6"/>`);
[0, PANEL].forEach(o => {
  rect(42.5, 58, 553 + o, 558 + o, '#999'); rect(43, 58, 555 + o, 556 + o, '#000');
  text(41.500, 585.5 + o, 'rev', 'R');
  arrow(530 + o, 1, o > 0); arrow(603.5 + o, -1, !o);
});
document.getElementById('canvas').innerHTML = out.join('');
```
